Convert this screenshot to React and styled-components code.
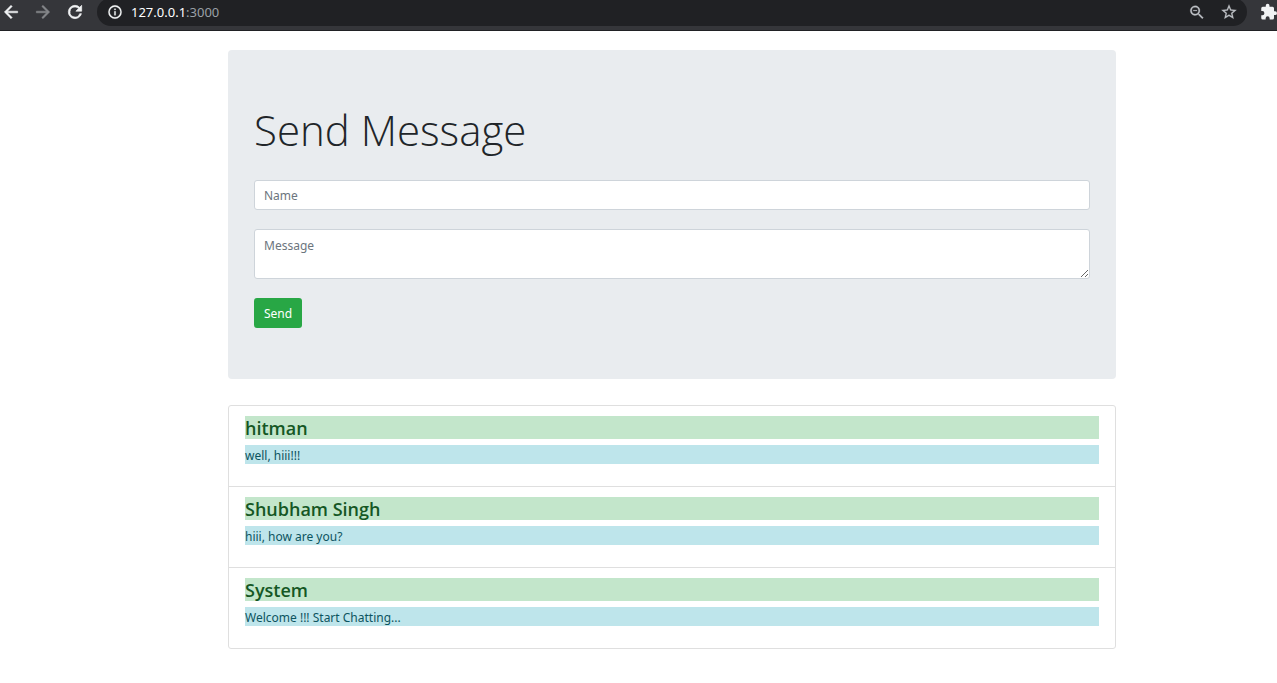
import React from "react";
import styled, { createGlobalStyle } from "styled-components";

const GlobalStyle = createGlobalStyle`
  *, *::before, *::after { box-sizing: border-box; }
  body {
    margin: 0;
    background: #fff;
    color: #212529;
    font-family: "Noto Sans", "Open Sans", sans-serif;
    font-size: 12px;
    line-height: 19px;
  }
`;

const Toolbar = styled.header`
  display: flex;
  align-items: flex-end;
  height: 31px;
  padding-bottom: 4px;
  border-bottom: 1px solid #202124;
  background: #35363a;
  overflow: hidden;
`;

const NavButtons = styled.nav`
  display: flex;
  flex: none;
  width: 97px;
  gap: 10px;
`;

const IconButton = styled.button`
  display: flex;
  flex: none;
  align-items: center;
  justify-content: center;
  width: ${(p) => p.$width || 20}px;
  height: 28px;
  padding: 0;
  border: 0;
  background: none;
  color: ${(p) => p.$color || "#f1f3f4"};
`;

const AddressBar = styled.div`
  display: flex;
  flex: 1;
  align-items: center;
  gap: 12px;
  height: 28px;
  padding: 0 8px;
  border-radius: 14px;
  background: #202124;
`;

const Address = styled.div`
  flex: 1;
  margin-left: -6px;
  color: #9aa0a6;
  font-size: 13px;
`;

const Host = styled.span`
  color: #fff;
`;

const Extensions = styled.div`
  display: flex;
  justify-content: flex-end;
  flex: none;
  width: 30px;
`;

const Page = styled.main`
  padding: 19px 161px 19px 228px;
`;

const Jumbotron = styled.section`
  padding: 51px 26px;
  border-radius: 4px;
  background: #e9ecef;
`;

const Title = styled.h1`
  margin: 0 0 21px;
  font-family: "Open Sans", "Noto Sans", sans-serif;
  font-size: 42px;
  font-weight: 300;
  line-height: 58px;
`;

const Form = styled.form`
  display: flex;
  flex-direction: column;
  align-items: flex-start;
  gap: 19px;
`;

const Field = styled.input`
  display: block;
  width: 100%;
  height: ${(p) => p.$height}px;
  padding: ${(p) => (p.as === "textarea" ? "6px 9px" : "4px 9px")};
  border: 1px solid #ced4da;
  border-radius: 3px;
  background: #fff;
  color: #495057;
  font: inherit;
  resize: vertical;
  &::placeholder { color: #6c757d; opacity: 1; }
`;

const SendButton = styled.button`
  height: 30px;
  padding: 0 10px;
  border: 0;
  border-radius: 3px;
  background: #28a745;
  color: #fff;
  font: inherit;
`;

const Messages = styled.ul`
  margin: 26px 0 0;
  padding: 0;
  border: 1px solid #dfdfdf;
  border-radius: 3px;
  list-style: none;
`;

const Message = styled.li`
  padding: 10px 16px 22px;
  & + & { border-top: 1px solid #dfdfdf; }
`;

const Author = styled.h5`
  margin: 0 0 6px;
  padding-top: 1px;
  background: #c3e6cb;
  color: #155724;
  font-family: "Open Sans", "Noto Sans", sans-serif;
  font-size: 18px;
  font-weight: 600;
  line-height: 22px;
`;

const Body = styled.p`
  margin: 0;
  padding-top: 2px;
  background: #bee5eb;
  color: #0c5460;
  line-height: 17px;
`;

const BackIcon = () => (
  <svg width="20" height="20" viewBox="0 0 24 24" fill="currentColor">
    <path d="M20 11H7.83l5.59-5.59L12 4l-8 8 8 8 1.41-1.41L7.83 13H20z" stroke="currentColor" strokeWidth=".6" />
  </svg>
);
const ForwardIcon = () => (
  <svg width="20" height="20" viewBox="0 0 24 24" fill="currentColor">
    <path d="M12 4l-1.41 1.41L16.17 11H4v2h12.17l-5.58 5.59L12 20l8-8z" stroke="currentColor" strokeWidth=".6" />
  </svg>
);
const ReloadIcon = () => (
  <svg width="20" height="20" viewBox="0 0 24 24" fill="currentColor">
    <path d="M17.65 6.35A7.96 7.96 0 0 0 12 4a8 8 0 1 0 7.73 10h-2.08A6 6 0 1 1 12 6c1.66 0 3.14.69 4.22 1.78L13 11h7V4z" stroke="currentColor" strokeWidth=".8" />
  </svg>
);
const InfoIcon = () => (
  <svg width="16" height="16" viewBox="0 0 24 24" fill="currentColor">
    <path d="M11 17h2v-6h-2zm1-15a10 10 0 1 0 0 20 10 10 0 0 0 0-20zm0 18a8 8 0 1 1 0-16 8 8 0 0 1 0 16zM11 9h2V7h-2z" stroke="currentColor" strokeWidth=".4" />
  </svg>
);
const ZoomOutIcon = () => (
  <svg width="18" height="18" viewBox="0 -0.6 24 24" fill="currentColor">
    <path d="M15.5 14h-.79l-.28-.27A6.5 6.5 0 1 0 13.73 14.43l.27.28v.79l5 4.99L20.49 19zm-6 0a4.5 4.5 0 1 1 0-9 4.5 4.5 0 0 1 0 9zM7 9h5v1H7z" stroke="currentColor" strokeWidth=".3" />
  </svg>
);
const StarIcon = () => (
  <svg width="18" height="18" viewBox="0 0 24 24" fill="currentColor">
    <path d="M22 9.24l-7.19-.62L12 2 9.19 8.63 2 9.24l5.46 4.73L5.82 21 12 17.27 18.18 21l-1.63-7.03zM12 15.4l-3.76 2.27 1-4.28-3.32-2.88 4.38-.38L12 6.1l1.71 4.04 4.38.38-3.32 2.88 1 4.28z" stroke="currentColor" strokeWidth=".3" />
  </svg>
);
const PuzzleIcon = () => (
  <svg width="18" height="18" viewBox="-1 0 24 24" fill="currentColor">
    <path d="M20.5 11H19V7a2 2 0 0 0-2-2h-4V3.5a2.5 2.5 0 0 0-5 0V5H4a2 2 0 0 0-1.99 2v3.8H3.5a2.7 2.7 0 0 1 0 5.4H2V20a2 2 0 0 0 2 2h3.8v-1.5a2.7 2.7 0 0 1 5.4 0V22H17a2 2 0 0 0 2-2v-4h1.5a2.5 2.5 0 0 0 0-5z" />
  </svg>
);

const messages = [
  { author: "hitman", text: "well, hiii!!!" },
  { author: "Shubham Singh", text: "hiii, how are you?" },
  { author: "System", text: "Welcome !!! Start Chatting..." },
];

export default function App() {
  return (
    <>
      <GlobalStyle />
      <Toolbar>
        <NavButtons>
          <IconButton aria-label="Back" $width={22}><BackIcon /></IconButton>
          <IconButton aria-label="Forward" $width={22} $color="#85878a"><ForwardIcon /></IconButton>
          <IconButton aria-label="Reload" $width={22}><ReloadIcon /></IconButton>
        </NavButtons>
        <AddressBar>
          <IconButton aria-label="Site information"><InfoIcon /></IconButton>
          <Address><Host>127.0.0.1</Host>:3000</Address>
          <IconButton aria-label="Zoom" $color="#bdc1c6"><ZoomOutIcon /></IconButton>
          <IconButton aria-label="Bookmark" $color="#bdc1c6"><StarIcon /></IconButton>
        </AddressBar>
        <Extensions>
          <IconButton aria-label="Extensions" $width={18}><PuzzleIcon /></IconButton>
        </Extensions>
      </Toolbar>
      <Page>
        <Jumbotron>
          <Title>Send Message</Title>
          <Form onSubmit={(e) => e.preventDefault()}>
            <Field $height={30} aria-label="Name" placeholder="Name" />
            <Field as="textarea" $height={50} aria-label="Message" placeholder="Message" />
            <SendButton type="submit">Send</SendButton>
          </Form>
        </Jumbotron>
        <Messages>
          {messages.map((m) => (
            <Message key={m.author}>
              <Author>{m.author}</Author>
              <Body>{m.text}</Body>
            </Message>
          ))}
        </Messages>
      </Page>
    </>
  );
}
